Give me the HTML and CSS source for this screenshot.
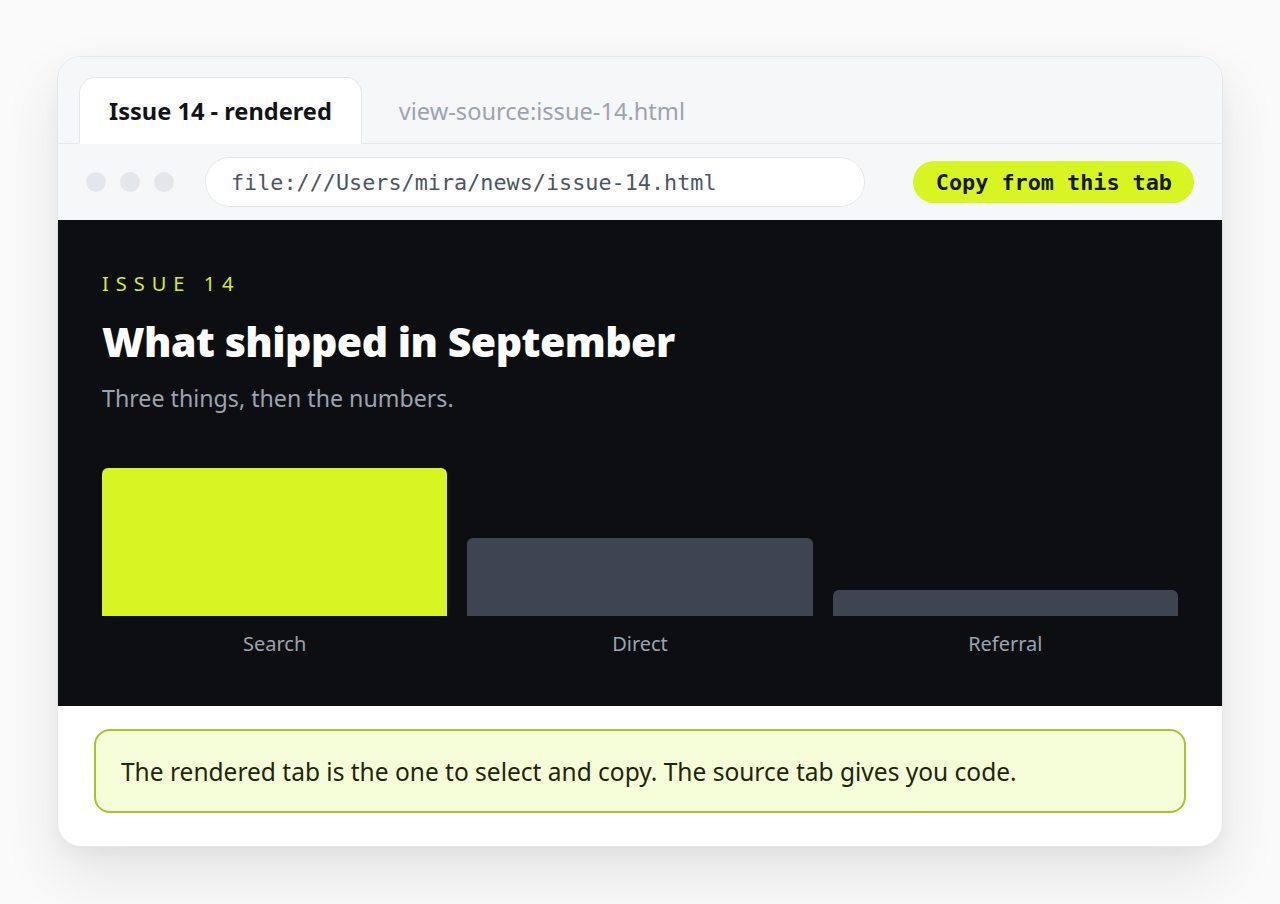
FILE: index.html
```html
<!DOCTYPE html>
<html lang="en">
<head>
<meta charset="utf-8">
<title>Issue 14</title>
<link rel="stylesheet" href="styles.css">
</head>
<body>
<div class="window">
  <div class="tabs">
    <div class="tab active">Issue 14 - rendered</div>
    <div class="tab">view-source:issue-14.html</div>
  </div>
  <div class="toolbar">
    <div class="dots"><span></span><span></span><span></span></div>
    <div class="address">file:///Users/mira/news/issue-14.html</div>
    <button class="copy">Copy from this tab</button>
  </div>
  <div class="page">
    <div class="eyebrow">ISSUE 14</div>
    <h1>What shipped in September</h1>
    <p class="sub">Three things, then the numbers.</p>
    <div class="chart">
      <div class="col"><div class="bar-wrap"><div class="bar lime" style="height:148px"></div></div><div class="label">Search</div></div>
      <div class="col"><div class="bar-wrap"><div class="bar" style="height:78px"></div></div><div class="label">Direct</div></div>
      <div class="col"><div class="bar-wrap"><div class="bar" style="height:26px"></div></div><div class="label">Referral</div></div>
    </div>
  </div>
  <div class="foot">
    <div class="note">The rendered tab is the one to select and copy. The source tab gives you code.</div>
  </div>
</div>
</body>
</html>
```
FILE: styles.css
```css
* { box-sizing: border-box; }
html, body { margin: 0; }
body {
  background: #fafafa;
  font-family: "Noto Sans", "Open Sans", sans-serif;
  padding: 56px 57px 0;
  height: 904px;
  overflow: hidden;
}
.window {
  width: 1166px;
  height: 791px;
  background: #fff;
  border: 1px solid #e5e7eb;
  border-radius: 24px;
  overflow: hidden;
  box-shadow: 0 28px 60px rgba(0,0,0,0.09), 0 6px 16px rgba(0,0,0,0.04);
  display: flex;
  flex-direction: column;
}
.tabs {
  background: #f6f7f9;
  height: 87px;
  display: flex;
  align-items: flex-end;
  padding-left: 21px;
  border-bottom: 1px solid #e5e7eb;
}
.tab {
  height: 67px;
  display: flex;
  align-items: center;
  padding: 0 29px 0 37px;
  font-size: 23.6px;
  color: #9ca3af;
  margin-bottom: -1px;
}
.tab.active {
  background: #fff;
  border: 1px solid #e5e7eb;
  border-radius: 16px 16px 0 0;
  color: #111318;
  font-weight: 700;
  padding: 0 29px;
  height: 67px;
  border-bottom: 1px solid #fff;
}
.toolbar {
  background: #f6f7f9;
  height: 76px;
  display: flex;
  align-items: center;
  padding: 0 28px;
}
.dots { display: flex; gap: 14px; }
.dots span {
  width: 20px; height: 20px; border-radius: 50%;
  background: #e3e6ea;
}
.address {
  margin-left: 31px;
  width: 660px;
  height: 50px;
  border-radius: 25px;
  background: #fff;
  border: 1px solid #e5e7eb;
  display: flex;
  align-items: center;
  padding-left: 25px;
  font-family: "DejaVu Sans Mono", monospace;
  font-size: 21.8px;
  color: #4b5563;
}
.copy {
  margin-left: auto;
  height: 42px;
  border: none;
  border-radius: 21px;
  background: #d7f523;
  padding: 0 22px 0 23px;
  font-family: "DejaVu Sans Mono", monospace;
  font-weight: 700;
  font-size: 21.8px;
  color: #15170c;
}
.page {
  background: #0c0e12;
  height: 486px;
  padding: 52px 44px 0;
}
.eyebrow {
  color: #d4ef2a;
  font-size: 20px;
  letter-spacing: 7px;
  line-height: 24px;
}
h1 {
  margin: 19px 0 0;
  color: #fff;
  font-size: 41px;
  font-weight: 900;
  line-height: 52px;
  letter-spacing: -0.5px;
}
.sub {
  margin: 16px 0 0;
  color: #9ca3af;
  font-size: 23.2px;
  line-height: 30px;
}
.chart {
  margin-top: 55px;
  display: flex;
  gap: 20px;
}
.col { flex: 1; display: flex; flex-direction: column; }
.bar-wrap { height: 148px; display: flex; align-items: flex-end; }
.bar {
  width: 100%;
  background: #3f4550;
  border-radius: 6px 6px 0 0;
}
.bar.lime { background: #d7f523; }
.label {
  text-align: center;
  color: #9ca3af;
  font-size: 20px;
  line-height: 28px;
  margin-top: 14px;
}
.foot {
  flex: 1;
  padding: 23px 36px 0;
}
.note {
  height: 84px;
  background: #f6fdd9;
  border: 2px solid #a9c22e;
  border-radius: 16px;
  display: flex;
  align-items: center;
  padding-left: 25px;
  font-size: 24.5px;
  color: #1c2608;
}
```
